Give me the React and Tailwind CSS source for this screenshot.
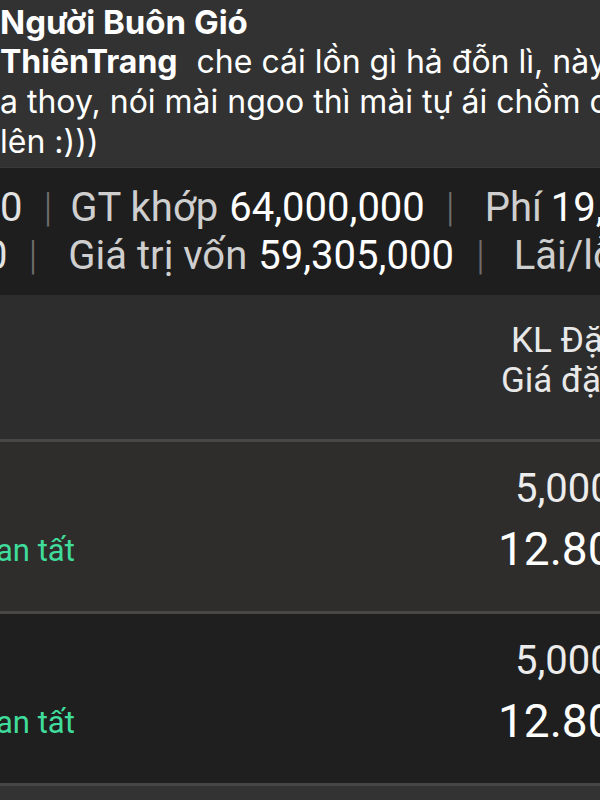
const comment = {
  author: "Người Buôn Gió",
  mention: "ThiênTrang",
  lines: [
    "che cái lồn gì hả đỗn lì, này",
    "a thoy, nói mài ngoo thì mài tự ái chồm c",
    "lên :)))",
  ],
};

function Bar() {
  return <span className="text-[#6e6e6e] font-light">|</span>;
}

function OrderRow({ bg, qty, price }) {
  return (
    <div className={`${bg} h-[172px] flex items-start justify-between overflow-hidden border-b-[3px] border-[#474747]`}>
      <div className="pt-[86px] -ml-[4px] text-[31px] text-[#3fdc9b] whitespace-nowrap">an tất</div>
      <div className="w-[102px] shrink-0 pt-[25px] whitespace-nowrap text-white">
        <div className="pl-[17px] text-[40px] leading-[44px] text-[#ececec]">{qty}</div>
        <div className="mt-[10px] text-[46px] leading-[56px]">{price}</div>
      </div>
    </div>
  );
}

export default function App() {
  return (
    <div className="w-[600px] h-[800px] overflow-hidden bg-[#333333] font-['Roboto',sans-serif]">
      {/* bình luận facebook */}
      <div className="h-[167px] bg-[#323232] pt-[2px] font-['Inter',sans-serif] text-[32px] leading-[40px] text-white whitespace-nowrap overflow-hidden">
        <div className="font-bold text-[33px]">{comment.author}</div>
        <div>
          <span className="font-bold">{comment.mention}</span>
          <span className="ml-[19px]">{comment.lines[0]}</span>
        </div>
        <div>{comment.lines[1]}</div>
        <div>{comment.lines[2]}</div>
      </div>

      {/* tổng hợp khớp lệnh */}
      <div className="h-[128px] bg-[#1e1e1e] border-t border-[#3a3a3a] pt-[16px] text-[40px] leading-[48px] whitespace-nowrap overflow-hidden">
        <div className="flex items-center">
          <span className="text-[#e2e2e2]">0</span>
          <span className="ml-[21px]"><Bar /></span>
          <span className="ml-[18px] text-[#cfcfcf]">GT khớp</span>
          <span className="ml-[11px] text-white">64,000,000</span>
          <span className="ml-[21px]"><Bar /></span>
          <span className="ml-[30px] text-[#cfcfcf]">Phí</span>
          <span className="ml-[9px] text-white">19,200</span>
        </div>
        <div className="flex items-center -ml-[15px]">
          <span className="text-[#e2e2e2]">0</span>
          <span className="ml-[21px]"><Bar /></span>
          <span className="ml-[31px] text-[#cfcfcf]">Giá trị vốn</span>
          <span className="ml-[11px] text-white">59,305,000</span>
          <span className="ml-[22px]"><Bar /></span>
          <span className="ml-[29px] text-[#cfcfcf]">Lãi/lỗ</span>
        </div>
      </div>

      {/* tiêu đề bảng */}
      <div className="h-[147px] bg-[#2d2d2d] border-b-[3px] border-[#474747] flex justify-end overflow-hidden">
        <div className="w-[100px] shrink-0 pt-[26px] text-[35px] leading-[40px] text-[#e8e8e8] whitespace-nowrap">
          <div className="pl-[11px]">KL Đặt</div>
          <div className="pl-[1px]">Giá đặt</div>
        </div>
      </div>

      <OrderRow bg="bg-[#2e2d2c]" qty="5,000" price="12.800" />
      <OrderRow bg="bg-[#1f1f1f]" qty="5,000" price="12.800" />
    </div>
  );
}
